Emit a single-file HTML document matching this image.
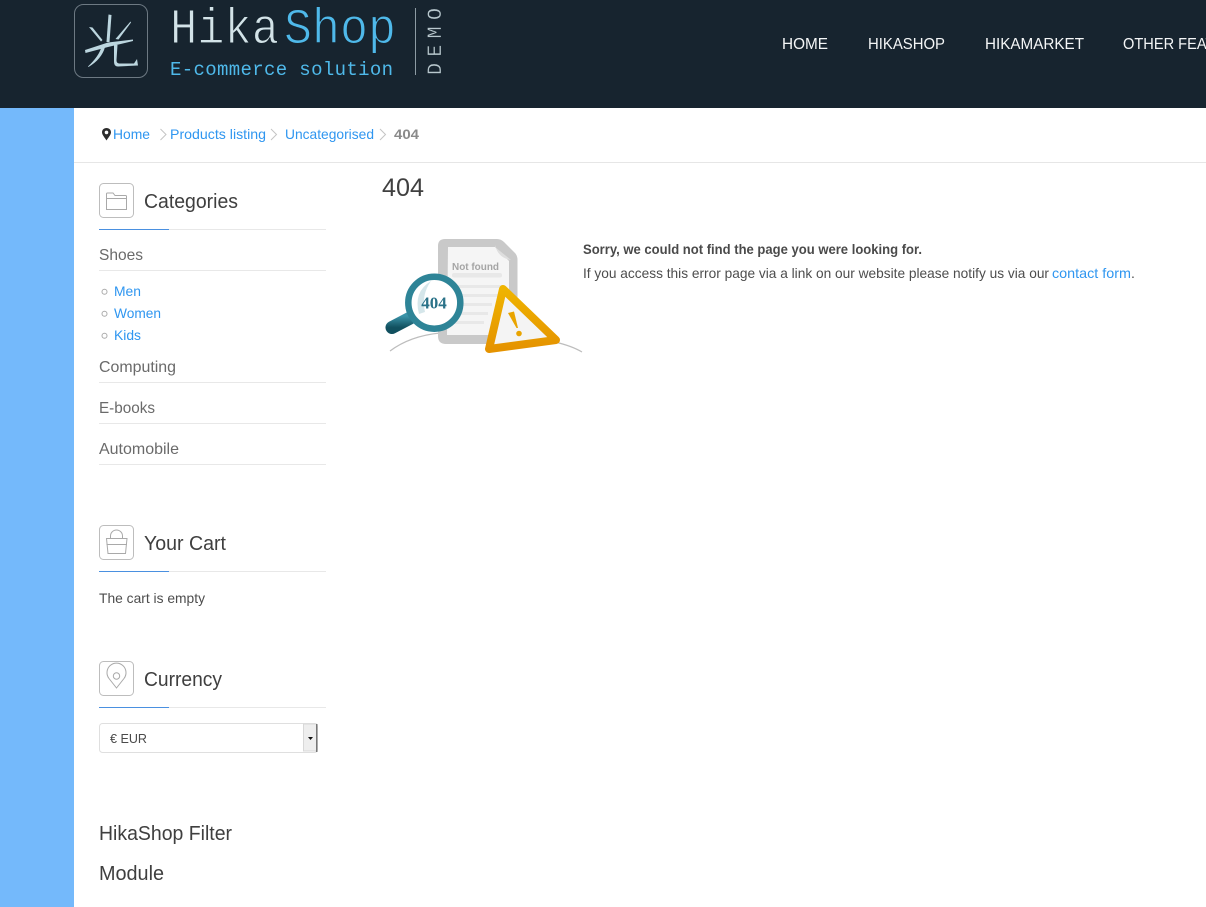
<!DOCTYPE html>
<html lang="en"><head><meta charset="utf-8"><title>404</title>
<style>
html,body{margin:0;padding:0;background:#fff;width:1206px;height:907px;overflow:hidden}
svg{display:block}
text{font-family:"Liberation Sans",sans-serif}
.nav{fill:#f4f6f7;font-size:16px}
.bc{fill:#2f96f0;font-size:14px}
.t{fill:#3f3f3f;font-size:20px}
.c{fill:#6a6a6a;font-size:16px}
.s{fill:#2f96f0;font-size:14px}
.b{fill:#4d4d4d;font-size:14px}
.l{fill:#e8e8e8}
.u{fill:#4a90e0}
.ib{fill:#fff;stroke:#bdbdbd}
.ic{fill:none;stroke:#a9a9a9;stroke-width:1}
.m{font-family:"Liberation Mono",monospace}
</style></head><body>
<svg width="1206" height="907" viewBox="0 0 1206 907" xmlns="http://www.w3.org/2000/svg">
<defs>
<linearGradient id="h" x1="0" y1="0" x2="0" y2="1"><stop offset="0" stop-color="#3a93a8"/><stop offset="1" stop-color="#11505f"/></linearGradient>
<linearGradient id="o" x1="0" y1="0" x2="0" y2="1"><stop offset="0" stop-color="#efb400"/><stop offset="1" stop-color="#e59300"/></linearGradient>
</defs>
<rect x="0" y="0" width="1206" height="108" fill="#17242f"/>
<rect x="0" y="108" width="74" height="799" fill="#74b9fb"/>

<rect x="74.5" y="4.5" width="73" height="73" rx="9" fill="none" stroke="#6d7983"/>
<g fill="#bcd6df">
<path d="M108.5 14.5 L111.5 15 L109.5 42 L106.5 42 Z"/>
<path d="M89 27 L92.5 27.5 L102.5 40 L101 41.5 Z"/>
<path d="M130.5 21.5 L131 22.5 L118.5 39.5 L115.5 39 Z"/>
<path d="M85 50 L85.5 53 L108 47 L133 41 L133 39.5 L108 42.5 Z"/>
<path d="M101.5 46.5 L105 47 C103 55 97 62 88.5 67 L88 66.5 C95 60 100 53 101.5 46.5 Z"/>
<path d="M114 45 L117.5 45 L116.5 60 C116.5 63 118 63.5 120 63.5 L134 63.5 L137 59 L138 65.5 L118 66.5 C115 66.5 114 64.5 114 61 Z"/>
</g>
<text class="m" x="170" y="43" font-size="50" fill="#d3e3e8" stroke="#17242f" stroke-width="1.1" textLength="109" lengthAdjust="spacingAndGlyphs">Hika</text>
<text class="m" x="284" y="43" font-size="50" fill="#4fb9ea" stroke="#17242f" stroke-width="1.1" textLength="112" lengthAdjust="spacingAndGlyphs">Shop</text>
<text class="m" x="170" y="75" font-size="19" fill="#4fb9ea" textLength="223" lengthAdjust="spacing">E-commerce solution</text>
<rect x="415" y="8" width="1" height="67" fill="#8d9ba3"/>
<text class="m" transform="translate(441 75) rotate(-90)" font-size="20" fill="#b9c8ce" stroke="#17242f" stroke-width=".3" textLength="67" lengthAdjust="spacing">DEMO</text>

<text class="nav" x="782" y="49" textLength="46" lengthAdjust="spacingAndGlyphs">HOME</text>
<text class="nav" x="868" y="49" textLength="77" lengthAdjust="spacingAndGlyphs">HIKASHOP</text>
<text class="nav" x="985" y="49" textLength="99" lengthAdjust="spacingAndGlyphs">HIKAMARKET</text>
<text class="nav" x="1123" y="49" textLength="132" lengthAdjust="spacingAndGlyphs">OTHER FEATURES</text>

<path d="M106.5 128 C103.8 128 102 130 102 132.3 C102 135 105 138 106.5 140.5 C108 138 111 135 111 132.3 C111 130 109.2 128 106.5 128 Z M106.5 130.6 A1.8 1.8 0 1 1 106.5 134.2 A1.8 1.8 0 1 1 106.5 130.6 Z" fill="#2c2c2c" fill-rule="evenodd"/>
<text class="bc" x="113" y="139" textLength="37" lengthAdjust="spacingAndGlyphs">Home</text>
<path d="M160.5 129 L166 134.5 L160.5 140" fill="none" stroke="#c4c4c4"/>
<text class="bc" x="170" y="139" textLength="96" lengthAdjust="spacingAndGlyphs">Products listing</text>
<path d="M271 129 L276.5 134.5 L271 140" fill="none" stroke="#c4c4c4"/>
<text class="bc" x="285" y="139" textLength="89" lengthAdjust="spacingAndGlyphs">Uncategorised</text>
<path d="M380 129 L385.5 134.5 L380 140" fill="none" stroke="#c4c4c4"/>
<text x="394" y="139" font-size="13.5" font-weight="700" fill="#8a8a8a" textLength="25" lengthAdjust="spacingAndGlyphs">404</text>
<rect x="74" y="162" width="1132" height="1" fill="#e6e6e6"/>

<rect class="ib" x="99.5" y="183.5" width="34" height="34" rx="4"/>
<path class="ic" d="M106.5 209.5 V194 Q106.5 193 107.5 193 H113 L115 195.5 H125.5 Q126.5 195.5 126.5 196.5 V209.5 Z M106.5 198.5 H126.5"/>
<text class="t" x="144" y="208" textLength="94" lengthAdjust="spacingAndGlyphs">Categories</text>
<rect class="l" x="99" y="229" width="227" height="1"/><rect class="u" x="99" y="229" width="70" height="1"/>

<text class="c" x="99" y="260" textLength="44" lengthAdjust="spacingAndGlyphs">Shoes</text>
<rect class="l" x="99" y="270" width="227" height="1"/>
<g fill="none" stroke="#ababab"><circle cx="104.5" cy="291.8" r="2.5"/><circle cx="104.5" cy="313.8" r="2.5"/><circle cx="104.5" cy="335.8" r="2.5"/></g>
<text class="s" x="114" y="296" textLength="27" lengthAdjust="spacingAndGlyphs">Men</text>
<text class="s" x="114" y="318" textLength="47" lengthAdjust="spacingAndGlyphs">Women</text>
<text class="s" x="114" y="340" textLength="27" lengthAdjust="spacingAndGlyphs">Kids</text>
<text class="c" x="99" y="372" textLength="77" lengthAdjust="spacingAndGlyphs">Computing</text>
<rect class="l" x="99" y="382" width="227" height="1"/>
<text class="c" x="99" y="413" textLength="56" lengthAdjust="spacingAndGlyphs">E-books</text>
<rect class="l" x="99" y="423" width="227" height="1"/>
<text class="c" x="99" y="454" textLength="80" lengthAdjust="spacingAndGlyphs">Automobile</text>
<rect class="l" x="99" y="464" width="227" height="1"/>

<rect class="ib" x="99.5" y="525.5" width="34" height="34" rx="4"/>
<path class="ic" d="M106.5 538.5 H127 L125.5 553.5 H108 Z M106.5 544.5 H127 M110.5 538.5 V536 A6 6 0 0 1 122.5 536 V538.5"/>
<text class="t" x="144" y="550" textLength="82" lengthAdjust="spacingAndGlyphs">Your Cart</text>
<rect class="l" x="99" y="571" width="227" height="1"/><rect class="u" x="99" y="571" width="70" height="1"/>
<text class="b" x="99" y="603" textLength="106" lengthAdjust="spacingAndGlyphs">The cart is empty</text>

<rect class="ib" x="99.5" y="661.5" width="34" height="34" rx="4"/>
<path class="ic" d="M116.5 688 L109 678.5 A9.5 9.5 0 1 1 124 678.5 Z"/><circle class="ic" cx="116.5" cy="676" r="3.2"/>
<text class="t" x="144" y="686" textLength="78" lengthAdjust="spacingAndGlyphs">Currency</text>
<rect class="l" x="99" y="707" width="227" height="1"/><rect class="u" x="99" y="707" width="70" height="1"/>

<rect x="99.5" y="723.5" width="218" height="29" rx="3" fill="#fff" stroke="#dfdfdf"/>
<text x="110" y="743" font-size="13" fill="#4a4a4a" textLength="37" lengthAdjust="spacingAndGlyphs">€ EUR</text>
<rect x="303.5" y="724" width="13" height="27" fill="#eeeeee" stroke="#d8d8d8"/>
<rect x="316" y="724" width="1.5" height="28" fill="#777"/>
<path d="M308 737 H313 L310.5 740 Z" fill="#111"/>

<text x="99" y="840" font-size="20" fill="#3f3f3f" textLength="133" lengthAdjust="spacingAndGlyphs">HikaShop Filter</text>
<text x="99" y="880" font-size="20" fill="#3f3f3f" textLength="65" lengthAdjust="spacingAndGlyphs">Module</text>

<text x="382" y="196" font-size="25" fill="#404040" textLength="42" lengthAdjust="spacingAndGlyphs">404</text>

<path d="M390 351 Q410 336 440 333" fill="none" stroke="#bdbdbd" stroke-width="1.2"/>
<path d="M555 342 Q572 346 582 352" fill="none" stroke="#bdbdbd" stroke-width="1.2"/>
<path d="M445 239 H497 Q501 239 504 242 L514 252 Q517.500 255 517.500 260 V336 Q517.500 344 510 344 H446 Q438 344 438 336 V246 Q438 239 445 239 Z" fill="#c9c9c9"/>
<path d="M448 247 H495 L509 261 V335 H447 Z" fill="#f5f5f5"/>
<path d="M495 245 Q498 258 511 260 L495 247 Z" fill="#dedede"/>
<text x="452" y="270" font-size="10" font-weight="700" fill="#a5a5a5" textLength="47" lengthAdjust="spacingAndGlyphs">Not found</text>
<g fill="#e8e8e8"><rect x="452" y="273" width="50" height="4.500" rx="2"/><rect x="452" y="285" width="50" height="3"/><rect x="452" y="294" width="50" height="3"/><rect x="452" y="303" width="40" height="3"/><rect x="452" y="312" width="36" height="3"/><rect x="452" y="321" width="32" height="3"/></g>
<path d="M414 316 L392 327.500" stroke="url(#h)" stroke-width="13" stroke-linecap="round" fill="none"/>
<circle cx="434.300" cy="302.700" r="26" fill="#fff" stroke="#2e8497" stroke-width="6.500"/>
<path d="M419 314 Q413 292 431 281 Q421 295 425 312 Z" fill="#d5e6ea"/>
<text x="434" y="308.500" font-size="17" font-weight="700" fill="#2a7288" text-anchor="middle" style="font-family:'Liberation Serif',serif">404</text>
<path d="M503 289 L556 340 L489 349 Z" fill="#f4f4f4" stroke="url(#o)" stroke-width="8" stroke-linejoin="round"/>
<path d="M508 313 L514 311.500 L518 328 L516.500 328 Z" fill="#e9a400"/><circle cx="519" cy="333.500" r="2.800" fill="#e9a400"/>

<text x="583" y="254" font-size="14" font-weight="700" fill="#4a4a4a" textLength="339" lengthAdjust="spacingAndGlyphs">Sorry, we could not find the page you were looking for.</text>
<text class="b" x="583" y="278" textLength="466" lengthAdjust="spacingAndGlyphs">If you access this error page via a link on our website please notify us via our</text>
<text class="s" x="1052" y="278" textLength="79" lengthAdjust="spacingAndGlyphs">contact form</text>
<text class="b" x="1131" y="278">.</text>
</svg>
</body></html>
